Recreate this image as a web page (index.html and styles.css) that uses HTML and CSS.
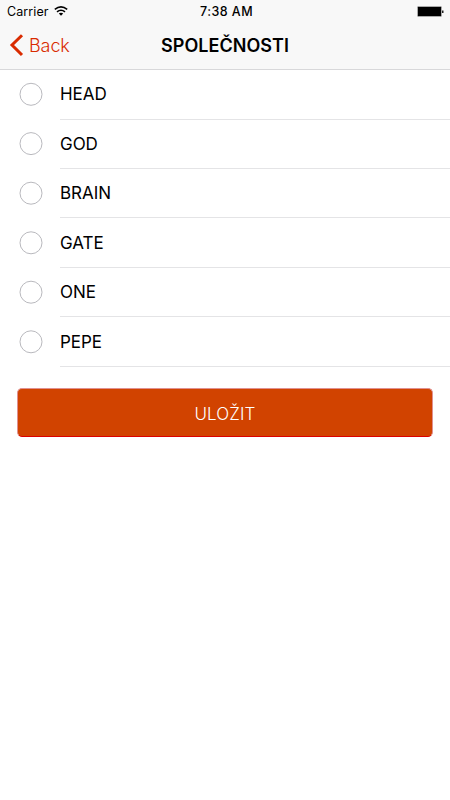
FILE: index.html
```html
<!DOCTYPE html>
<html lang="cs">
<head>
<meta charset="utf-8">
<title>Společnosti</title>
<link rel="stylesheet" href="styles.css">
</head>
<body>
<header class="header">
  <div class="status">
    <div class="carrier"><span>Carrier</span>
      <svg class="wifi" width="14" height="10" viewBox="0 0 14 10" fill="none" stroke="#000" stroke-width="1.6"><path d="M.8 3.4Q7-1.6 13.2 3.4M3 5.9Q7 2.6 11 5.9"/><path d="M4.8 7.5Q7 5.8 9.2 7.5L7 9.7Z" fill="#000" stroke="none"/></svg>
    </div>
    <div class="clock">7:38 AM</div>
    <svg class="battery" width="28" height="12" viewBox="0 0 28 12"><rect x=".5" y=".5" width="24" height="10" rx="1" stroke="#aaa" fill="#000"/><path d="M25 4.5H26.5V7H25" fill="#222"/></svg>
  </div>
  <nav class="nav">
    <a class="back"><svg width="15" height="23" viewBox="0 0 15 23" fill="none" stroke="#d92b00" stroke-width="3"><path d="M13 1.2L3 11L13 21"/></svg><span>Back</span></a>
    <h1 class="title">SPOLEČNOSTI</h1>
  </nav>
</header>
<main>
  <ul class="list">
    <li class="row"><svg class="radio" viewBox="0 0 24 25"><circle cx="12" cy="12.3" r="11"/></svg><span class="label">HEAD</span></li>
    <li class="row"><svg class="radio" viewBox="0 0 24 25"><circle cx="12" cy="11.6" r="11"/></svg><span class="label">GOD</span></li>
    <li class="row"><svg class="radio" viewBox="0 0 24 25"><circle cx="12" cy="12.2" r="11"/></svg><span class="label">BRAIN</span></li>
    <li class="row"><svg class="radio" viewBox="0 0 24 25"><circle cx="12" cy="12.8" r="11"/></svg><span class="label">GATE</span></li>
    <li class="row"><svg class="radio" viewBox="0 0 24 25"><circle cx="12" cy="12.2" r="11"/></svg><span class="label">ONE</span></li>
    <li class="row"><svg class="radio" viewBox="0 0 24 25"><circle cx="12" cy="12.8" r="11"/></svg><span class="label">PEPE</span></li>
  </ul>
  <button class="save">ULOŽIT</button>
</main>
</body>
</html>
```
FILE: styles.css
```css
* { box-sizing: border-box; }
body { margin: 0; height: 800px; background: #fff; color: #000; font-family: Inter, "Liberation Sans", sans-serif; overflow: hidden; }
.header { height: 70px; background: #f8f8f8; border-bottom: 1px solid #d8d8da; }
.status { display: grid; grid-template-columns: 1fr auto 1fr; align-items: center; height: 22px; padding: 0 5px 0 7px; }
.carrier { display: flex; align-items: center; gap: 5px; font-size: 12.5px; font-weight: 400; letter-spacing: .1px; line-height: 22px; padding-top: 1px; }
.wifi { margin-bottom: 3px; }
.clock { font-size: 12.5px; font-weight: 500; letter-spacing: .45px; line-height: 22px; padding: 1px 0 0 1px; }
.battery { justify-self: end; }
.nav { display: grid; grid-template-columns: 1fr auto 1fr; align-items: center; height: 46px; }
.back { display: flex; align-items: center; gap: 5px; padding-left: 9px; color: #d92b00; font-size: 18px; font-weight: 350; letter-spacing: -.1px; }
.title { margin: 2px 0 0; font-size: 18px; font-weight: 600; line-height: 24px; letter-spacing: .03px; }
.list { margin: 0; padding: 0; list-style: none; display: grid; grid-template-rows: 50px 49px 49px 50px 49px 50px; }
.row { display: grid; grid-template-columns: 60px 1fr; align-items: start; }
.radio { width: 24px; height: 25px; margin: 12px 0 0 19px; fill: none; stroke: #b9b9be; stroke-width: 1; }
.label { height: 100%; display: flex; align-items: center; border-bottom: 1px solid #e4e4e6; font-size: 17px; font-weight: 380; letter-spacing: -.05px; }
.row:first-child .label { padding-bottom: 1px; }
.save { display: block; width: 416px; height: 49px; margin: 21px 0 0 17px; padding: 2px 0 0; border: 1px solid #dc0000; border-top-color: #e09090; border-left-color: #e09090; border-right-color: #e09090; border-radius: 5px; background: #d14300; color: #fff; font-family: inherit; font-size: 17px; font-weight: 350; letter-spacing: .1px; }
```
